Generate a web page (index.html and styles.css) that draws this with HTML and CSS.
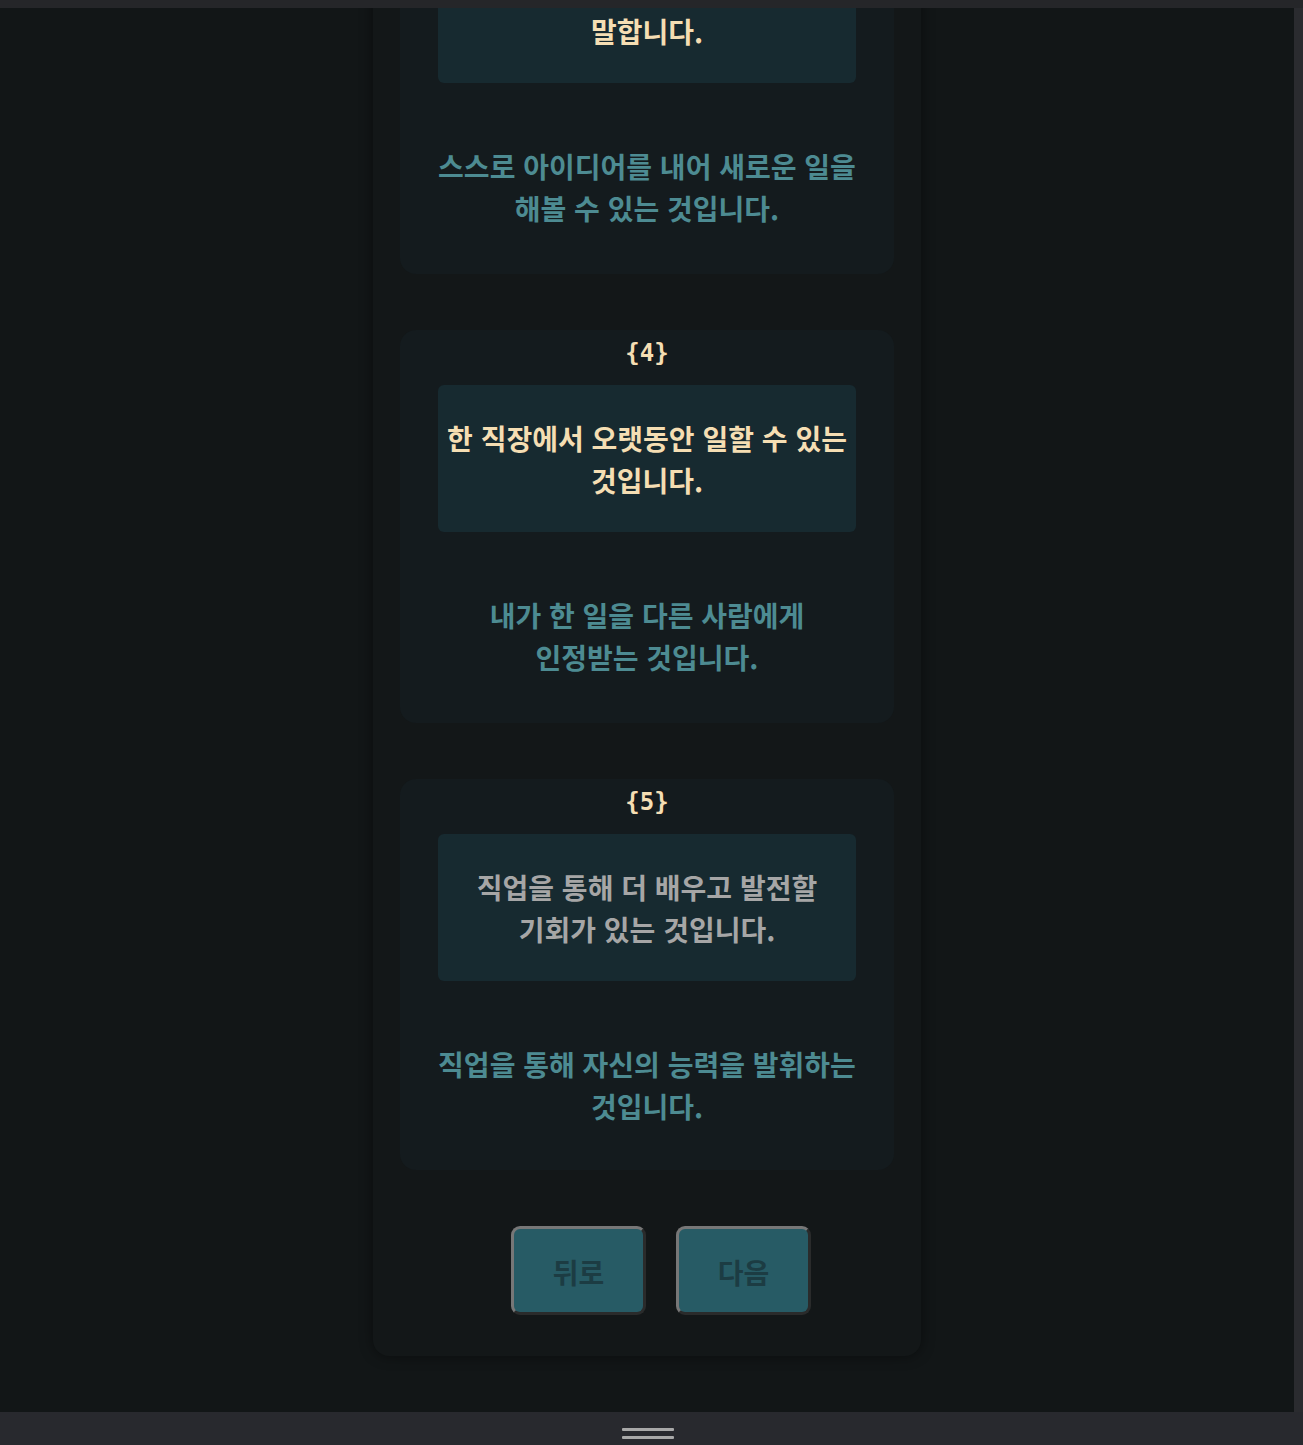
FILE: index.html
```html
<!DOCTYPE html>
<html lang="ko">
<head>
<meta charset="utf-8">
<title>직업 가치관 검사</title>
<link rel="stylesheet" href="styles.css">
</head>
<body>
<div class="topbar"></div>
<div class="frame">
  <div class="viewport">
    <main class="panel">
      <section class="card">
        <div class="num">{3}</div>
        <div class="opt opt-box opt-sel">정해진 시간에 규칙적으로 일하는 것을<br>말합니다.</div>
        <div class="opt">스스로 아이디어를 내어 새로운 일을<br>해볼 수 있는 것입니다.</div>
      </section>
      <section class="card">
        <div class="num">{4}</div>
        <div class="opt opt-box opt-sel">한 직장에서 오랫동안 일할 수 있는<br>것입니다.</div>
        <div class="opt">내가 한 일을 다른 사람에게<br>인정받는 것입니다.</div>
      </section>
      <section class="card">
        <div class="num">{5}</div>
        <div class="opt opt-box opt-grey">직업을 통해 더 배우고 발전할<br>기회가 있는 것입니다.</div>
        <div class="opt">직업을 통해 자신의 능력을 발휘하는<br>것입니다.</div>
      </section>
      <div class="actions">
        <button class="btn" type="button">뒤로</button>
        <button class="btn" type="button">다음</button>
      </div>
    </main>
  </div>
  <div class="scrolltrack"></div>
</div>
<div class="bottombar">
  <div class="handle"><span></span><span></span></div>
</div>
</body>
</html>
```

FILE: styles.css
```css
* { box-sizing: border-box; }
html, body {
  margin: 0;
  padding: 0;
  width: 1303px;
  height: 1445px;
  overflow: hidden;
  background: #121617;
  font-family: "Noto Sans CJK KR", "Noto Sans", sans-serif;
}
.topbar {
  height: 8px;
  background: #252629;
}
.frame {
  display: flex;
  height: 1404px;
}
.viewport {
  flex: 1;
  overflow: hidden;
  background: #121617;
}
.scrolltrack {
  width: 9px;
  background: #2a2b2f;
}
.panel {
  width: 548px;
  margin: -175px auto 0;
  padding: 48px 27px 41px;
  background: #131718;
  border-radius: 16px;
  box-shadow: 0 0 14px rgba(0, 0, 0, 0.45);
  display: flex;
  flex-direction: column;
  gap: 56px;
}
.card {
  background: #141b1e;
  border-radius: 16px;
  padding: 7px 38px 14px;
  display: flex;
  flex-direction: column;
  align-items: stretch;
}
.card:last-of-type { padding-bottom: 12px; }
.num {
  height: 32px;
  line-height: 32px;
  text-align: center;
  color: #f5deb3;
  font-family: "DejaVu Sans Mono", monospace;
  font-size: 24px;
  font-weight: 700;
  margin-bottom: 16px;
}
.opt {
  height: 147px;
  display: flex;
  align-items: center;
  justify-content: center;
  text-align: center;
  font-size: 28px;
  font-weight: 700;
  line-height: 42px;
  color: #4d8b92;
  white-space: nowrap;
  border-radius: 6px;
}
.opt + .opt { margin-top: 30px; }
.opt-box { background: #172a30; }
.opt-sel { color: #f5deb3; }
.opt-grey { color: #a6a6a6; }
.actions {
  display: flex;
  justify-content: center;
  gap: 30px;
  padding-left: 28px;
}
.btn {
  width: 135px;
  height: 89px;
  background: #275b65;
  border-style: solid;
  border-width: 3px;
  border-color: #777777 #2a2b2b #2a2b2b #777777;
  border-radius: 9px;
  color: #1c3c43;
  font-family: "Noto Sans CJK KR", "Noto Sans", sans-serif;
  font-size: 28px;
  font-weight: 700;
  padding: 2px 0 0;
}
.bottombar {
  height: 33px;
  background: #28292e;
  display: flex;
  justify-content: center;
  padding-top: 16px;
  padding-right: 8px;
}
.handle {
  display: flex;
  flex-direction: column;
  gap: 5px;
}
.handle span {
  display: block;
  width: 52px;
  height: 3px;
  border-radius: 1px;
  background: #a8a8a8;
}
```
